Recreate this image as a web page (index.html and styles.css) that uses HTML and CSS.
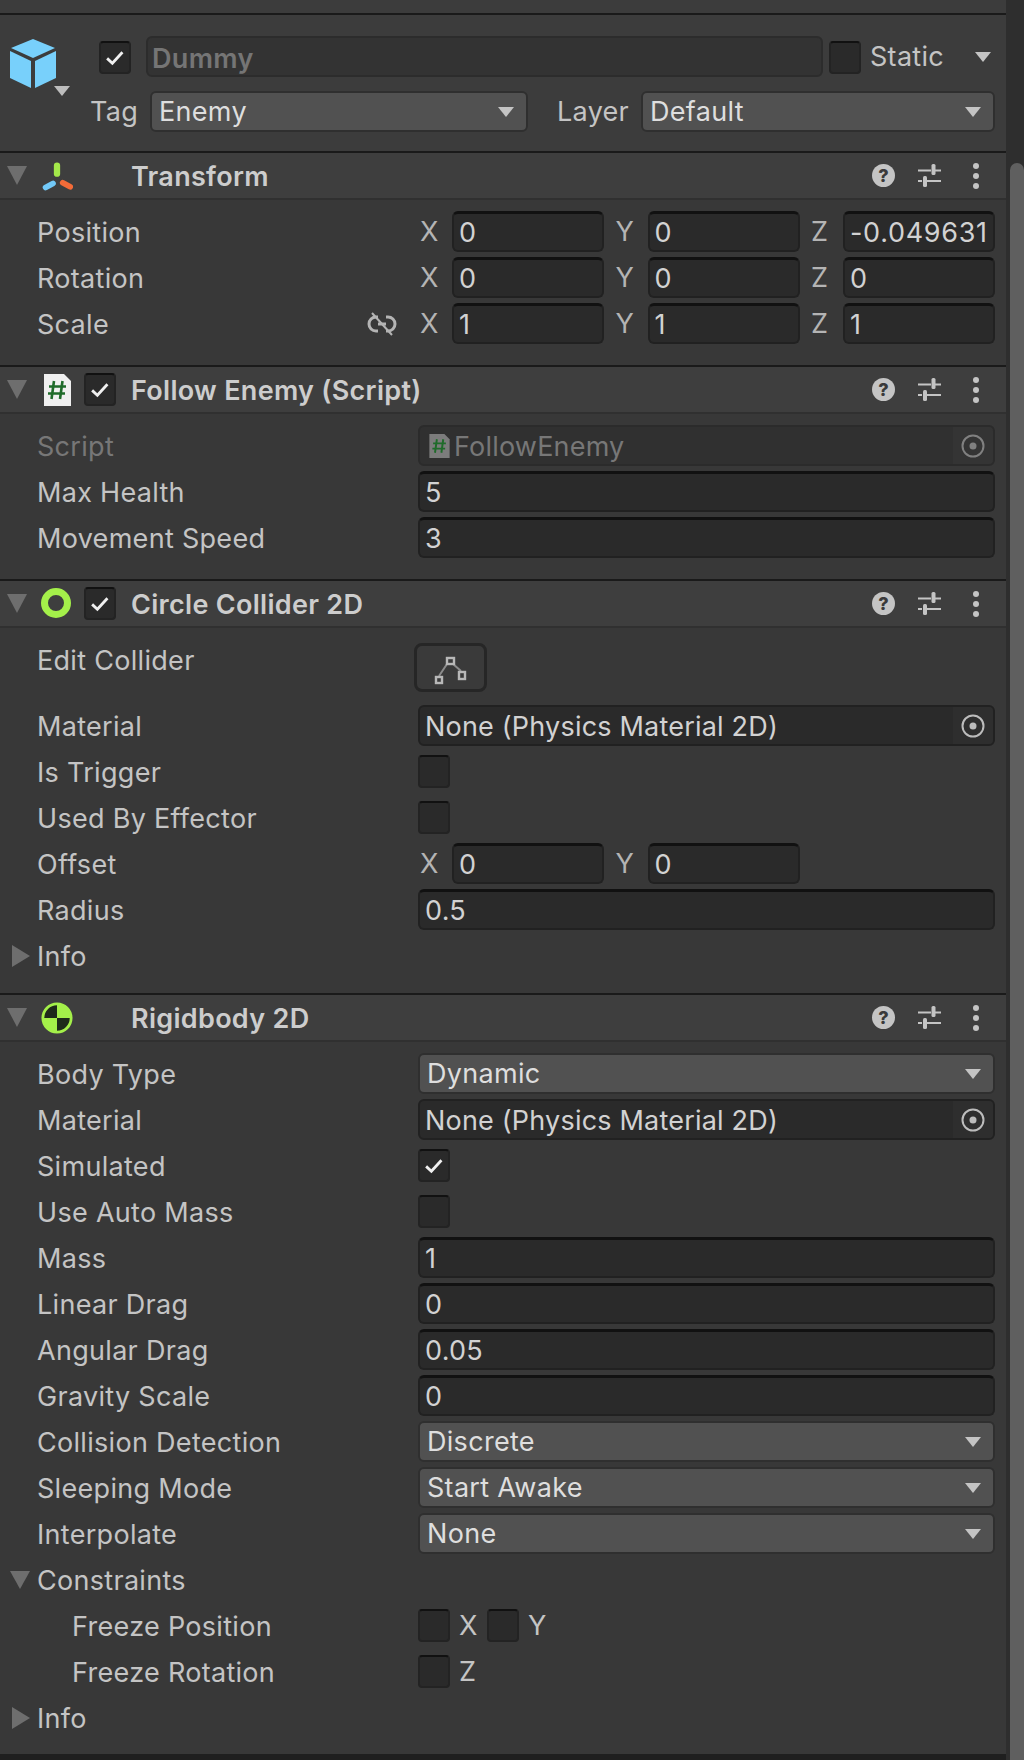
FILE: index.html
```html
<!DOCTYPE html>
<html lang="en">
  <head>
    <meta charset="UTF-8" />
    <title>Inspector</title>
    <link rel="stylesheet" href="styles.css">
  </head>
  <body>
    <svg class="defs" width="0" height="0">
      <symbol id="tick" viewBox="0 0 32 32">
        <path d="M7 17l6 5.500L24.500 10" fill="none" stroke="#f0f0f0" stroke-width="3.200"/>
      </symbol>
      <symbol id="target" viewBox="0 0 24 24">
        <circle cx="12" cy="12" r="10.500" fill="none" stroke="currentColor" stroke-width="2"/>
        <circle cx="12" cy="12" r="3.500" fill="currentColor"/>
      </symbol>
      <symbol id="sliders" viewBox="0 0 23 23">
        <path d="M0 6.500h13M17 6.500h6M0 17h4M8 17h15" fill="none" stroke="#c4c4c4" stroke-width="2"/>
        <rect x="13.500" y="0" width="4" height="11" rx="1.500" fill="#c4c4c4"/>
        <rect x="5" y="12" width="4" height="11" rx="1.500" fill="#c4c4c4"/>
      </symbol>
      <symbol id="script" viewBox="0 0 27 32">
        <path d="M0 0h20l7 7v25H0z" fill="currentColor"/>
        <path d="M10 7L7.500 25M18.500 7L16 25M5 12.500h17M4 19.500h17" fill="none" stroke="#1f6b2a" stroke-width="2.600"/>
      </symbol>
    </svg>

    <div class="inspector">
      <div class="topband"></div>

      <section class="go-header">
        <div class="go-first">
          <svg class="cube" viewBox="0 0 46 50">
            <path d="M23 0L45 9 23 19 1 9z" fill="#78d0fb"/>
            <path d="M0 12l21 10v27L0 39z" fill="#78d0fb"/>
            <path d="M46 12L25 22v27l21-10z" fill="#78d0fb"/>
          </svg>
          <span class="cube-caret"></span>
          <span class="check go-check"><svg><use href="#tick"/></svg></span>
          <div class="name-field">Dummy</div>
          <span class="check static-check"></span>
          <span class="static-label">Static</span>
          <span class="caret static-caret"></span>
        </div>
        <div class="go-second">
          <span class="tag-label">Tag</span>
          <div class="dropdown tag-drop">Enemy<span class="caret"></span></div>
          <span class="layer-label">Layer</span>
          <div class="dropdown layer-drop">Default<span class="caret"></span></div>
        </div>
      </section>

      <section class="comp">
        <header class="comp-head">
          <span class="fold"></span>
          <svg class="comp-icon" viewBox="0 0 28 28">
            <path d="M14 5v7" stroke="#a4e84a" stroke-width="5.500" stroke-linecap="round"/>
            <path d="M4 24l6.500-3.500" stroke="#72c9f8" stroke-width="5" stroke-linecap="round"/>
            <path d="M19 20l6.500 3.500" stroke="#f36b38" stroke-width="5" stroke-linecap="round"/>
          </svg>
          <span class="no-check"></span>
          <h2>Transform</h2>
          <span class="head-tools"><span class="help">?</span><svg class="tool"><use href="#sliders"/></svg><span class="dots"><i></i><i></i><i></i></span></span>
        </header>
        <div class="comp-body">
          <div class="row">
            <label>Position</label>
            <div class="vec">
              <span class="axis">X</span><div class="field">0</div>
              <span class="axis">Y</span><div class="field">0</div>
              <span class="axis">Z</span><div class="field">-0.049631</div>
            </div>
          </div>
          <div class="row">
            <label>Rotation</label>
            <div class="vec">
              <span class="axis">X</span><div class="field">0</div>
              <span class="axis">Y</span><div class="field">0</div>
              <span class="axis">Z</span><div class="field">0</div>
            </div>
          </div>
          <div class="row">
            <label>Scale</label>
            <svg class="link" viewBox="0 0 30 24">
              <path d="M11 5H9a7 7 0 0 0 0 14h2M19 5h2a7 7 0 0 1 0 14h-2M11 12h8" fill="none" stroke="#b4b4b4" stroke-width="3"/>
              <path d="M5 1l20 22" fill="none" stroke="#b4b4b4" stroke-width="2"/>
            </svg>
            <div class="vec">
              <span class="axis">X</span><div class="field">1</div>
              <span class="axis">Y</span><div class="field">1</div>
              <span class="axis">Z</span><div class="field">1</div>
            </div>
          </div>
        </div>
      </section>

      <section class="comp">
        <header class="comp-head">
          <span class="fold"></span>
          <svg class="comp-icon script-icon"><use href="#script"/></svg>
          <span class="check"><svg><use href="#tick"/></svg></span>
          <h2>Follow Enemy (Script)</h2>
          <span class="head-tools"><span class="help">?</span><svg class="tool"><use href="#sliders"/></svg><span class="dots"><i></i><i></i><i></i></span></span>
        </header>
        <div class="comp-body">
          <div class="row">
            <label class="dim">Script</label>
            <div class="field object dim-field">
              <svg class="mini-script"><use href="#script"/></svg>
              <span class="object-name">FollowEnemy</span>
              <span class="picker"><svg><use href="#target"/></svg></span>
            </div>
          </div>
          <div class="row"><label>Max Health</label><div class="field">5</div></div>
          <div class="row"><label>Movement Speed</label><div class="field">3</div></div>
        </div>
      </section>

      <section class="comp">
        <header class="comp-head">
          <span class="fold"></span>
          <svg class="comp-icon" viewBox="0 0 32 32">
            <circle cx="15" cy="15" r="11.500" fill="none" stroke="#a4f04a" stroke-width="7"/>
          </svg>
          <span class="check"><svg><use href="#tick"/></svg></span>
          <h2>Circle Collider 2D</h2>
          <span class="head-tools"><span class="help">?</span><svg class="tool"><use href="#sliders"/></svg><span class="dots"><i></i><i></i><i></i></span></span>
        </header>
        <div class="comp-body edit-body">
          <div class="row edit-row">
            <label>Edit Collider</label>
            <button class="edit-btn">
              <svg viewBox="0 0 40 36">
                <path d="M8 24L16 12M22 12l8 7" fill="none" stroke="#8c8c8c" stroke-width="2"/>
                <rect x="16" y="6" width="7" height="6" fill="none" stroke="#b8b8b8" stroke-width="2.400"/>
                <rect x="5" y="25" width="6" height="6" fill="none" stroke="#b8b8b8" stroke-width="2.400"/>
                <rect x="28" y="20" width="6" height="7" fill="none" stroke="#b8b8b8" stroke-width="2.400"/>
              </svg>
            </button>
          </div>
          <div class="row">
            <label>Material</label>
            <div class="field object">
              <span class="object-name">None (Physics Material 2D)</span>
              <span class="picker"><svg><use href="#target"/></svg></span>
            </div>
          </div>
          <div class="row"><label>Is Trigger</label><span class="check"></span></div>
          <div class="row"><label>Used By Effector</label><span class="check"></span></div>
          <div class="row">
            <label>Offset</label>
            <div class="vec vec-two">
              <span class="axis">X</span><div class="field">0</div>
              <span class="axis">Y</span><div class="field">0</div>
            </div>
          </div>
          <div class="row"><label>Radius</label><div class="field">0.5</div></div>
          <div class="row"><span class="fold-small closed"></span><label class="fold-label">Info</label></div>
        </div>
      </section>

      <section class="comp">
        <header class="comp-head">
          <span class="fold"></span>
          <svg class="comp-icon" viewBox="0 0 34 34">
            <circle cx="17" cy="17" r="15.500" fill="#a4f04a" stroke="#a4f04a" stroke-width="2"/>
            <path d="M17 17V3.500A13.500 13.500 0 0 0 3.500 17zM17 17v13.500A13.500 13.500 0 0 0 30.500 17z" fill="#1e2a1a"/>
          </svg>
          <span class="no-check"></span>
          <h2>Rigidbody 2D</h2>
          <span class="head-tools"><span class="help">?</span><svg class="tool"><use href="#sliders"/></svg><span class="dots"><i></i><i></i><i></i></span></span>
        </header>
        <div class="comp-body last-body">
          <div class="row"><label>Body Type</label><div class="dropdown">Dynamic<span class="caret"></span></div></div>
          <div class="row">
            <label>Material</label>
            <div class="field object">
              <span class="object-name">None (Physics Material 2D)</span>
              <span class="picker"><svg><use href="#target"/></svg></span>
            </div>
          </div>
          <div class="row"><label>Simulated</label><span class="check"><svg><use href="#tick"/></svg></span></div>
          <div class="row"><label>Use Auto Mass</label><span class="check"></span></div>
          <div class="row"><label>Mass</label><div class="field">1</div></div>
          <div class="row"><label>Linear Drag</label><div class="field">0</div></div>
          <div class="row"><label>Angular Drag</label><div class="field">0.05</div></div>
          <div class="row"><label>Gravity Scale</label><div class="field">0</div></div>
          <div class="row"><label>Collision Detection</label><div class="dropdown">Discrete<span class="caret"></span></div></div>
          <div class="row"><label>Sleeping Mode</label><div class="dropdown">Start Awake<span class="caret"></span></div></div>
          <div class="row"><label>Interpolate</label><div class="dropdown">None<span class="caret"></span></div></div>
          <div class="row"><span class="fold-small"></span><label class="fold-label">Constraints</label></div>
          <div class="row">
            <label class="sub">Freeze Position</label>
            <span class="check"></span><span class="flag">X</span>
            <span class="check"></span><span class="flag">Y</span>
          </div>
          <div class="row">
            <label class="sub">Freeze Rotation</label>
            <span class="check"></span><span class="flag">Z</span>
          </div>
          <div class="row"><span class="fold-small closed"></span><label class="fold-label">Info</label></div>
        </div>
      </section>
      <div class="end-line"></div>
    </div>

    <div class="scrollbar"><div class="thumb"></div></div>
  </body>
</html>
```

FILE: styles.css
```css
html {
  height: 100%;
}

body {
  margin: 0;
  height: 1760px;
  overflow: hidden;
  display: flex;
  background: #383838;
  color: #c4c4c4;
  font: 400 27px/43px "Inter", "Noto Sans", sans-serif;
  letter-spacing: 0.3px;
}

.defs {
  position: absolute;
}

.inspector {
  width: 1006px;
  flex: none;
}

.scrollbar {
  width: 18px;
  padding-left: 4px;
  box-sizing: border-box;
  background: #2e2e2e;
}

.thumb {
  margin-top: 163px;
  height: 1597px;
  background: #5f5f5f;
  border-radius: 7px 7px 0 0;
}

.topband {
  height: 13px;
  background: #3c3c3c;
}

/* game object header */
.go-header {
  height: 138px;
  box-sizing: border-box;
  border-top: 2px solid #1a1a1a;
  background: #3c3c3c;
  padding-top: 21px;
}

.go-first {
  display: flex;
  align-items: center;
  height: 41px;
}

.cube {
  width: 46px;
  height: 50px;
  margin: 3px 0 0 10px;
  align-self: flex-start;
  flex: none;
}

.cube-caret {
  width: 0;
  height: 0;
  margin: 50px 0 0 -2px;
  border: 8px solid transparent;
  border-top: 10px solid #bdbdbd;
  border-bottom: 0;
  align-self: flex-start;
  flex: none;
}

.go-check {
  margin: 2px 0 0 29px;
}

.name-field {
  width: 677px;
  height: 41px;
  margin-left: 15px;
  padding-left: 4px;
  box-sizing: border-box;
  border: 2px solid #2c2c2c;
  border-radius: 6px;
  background: #333;
  color: #757575;
  font-weight: 600;
  line-height: 41px;
  flex: none;
}

.static-check {
  margin: 2px 0 0 6px;
}

.static-label {
  margin-left: 9px;
  width: 105px;
  flex: none;
}

.go-second {
  display: flex;
  height: 41px;
  margin-top: 14px;
  align-items: center;
}

.tag-label {
  margin-left: 90px;
  width: 60px;
  flex: none;
}

.go-second .tag-drop {
  flex: none;
  width: 378px;
}

.layer-label {
  margin-left: 29px;
  width: 84px;
  flex: none;
}

.go-second .layer-drop {
  flex: none;
  width: 354px;
}

/* component */
.comp {
  border-top: 2px solid #1a1a1a;
}

.comp-head {
  height: 47px;
  box-sizing: border-box;
  display: flex;
  align-items: center;
  border-bottom: 2px solid #303030;
  background: #3e3e3e;
}

.comp-head h2 {
  margin: 0 0 0 15px;
  padding-top: 2px;
  flex: 1;
  font-size: 27px;
  font-weight: 600;
  color: #cdcdcd;
}

.fold {
  width: 0;
  height: 0;
  margin-left: 7px;
  border: 10px solid transparent;
  border-top: 19px solid #6e6e6e;
  border-bottom: 0;
  flex: none;
}

.comp-icon {
  width: 32px;
  height: 32px;
  margin-left: 14px;
  flex: none;
}

.script-icon {
  width: 27px;
  margin-left: 17px;
  color: #f0f0f0;
}

.comp-icon + .check {
  margin-left: 11px;
}

.script-icon + .check {
  margin-left: 13px;
}

.no-check {
  width: 32px;
  margin-left: 11px;
  flex: none;
}

.head-tools {
  display: flex;
  align-items: center;
  margin-right: 27px;
}

.help {
  width: 23px;
  height: 23px;
  border-radius: 50%;
  background: #c4c4c4;
  color: #3a3a3a;
  font-size: 18px;
  font-weight: 800;
  line-height: 23px;
  text-align: center;
  letter-spacing: 0;
}

.tool {
  width: 23px;
  height: 23px;
  margin-left: 23px;
}

.dots {
  display: flex;
  flex-direction: column;
  gap: 4px;
  margin-left: 32px;
}

.dots i {
  width: 6px;
  height: 6px;
  border-radius: 50%;
  background: #c4c4c4;
}

.comp-body {
  display: flex;
  flex-direction: column;
  gap: 5px;
  padding: 11px 11px 21px 37px;
}

.edit-body {
  padding-top: 15px;
  padding-bottom: 17px;
}

.last-body {
  padding-bottom: 16px;
}

.row {
  display: flex;
  align-items: center;
  height: 41px;
}

.row label {
  width: 381px;
  padding-top: 2px;
  flex: none;
}

.row label.dim {
  color: #777;
}

.row label.sub {
  padding-left: 35px;
  box-sizing: border-box;
}

.edit-row {
  height: 49px;
  align-items: flex-start;
  margin-bottom: 8px;
}

.edit-row label {
  padding-top: 0;
  line-height: 36px;
}

.edit-btn {
  width: 73px;
  height: 49px;
  margin-left: -4px;
  padding: 0;
  border: 3px solid #262626;
  border-radius: 8px;
  background: #3a3a3a;
}

.edit-btn svg {
  display: block;
  width: 40px;
  height: 36px;
  margin: 4px auto 0;
}

.field {
  flex: 1;
  height: 41px;
  box-sizing: border-box;
  padding-left: 5px;
  border: 2px solid #212121;
  border-top: 3px solid #111;
  border-radius: 6px;
  background: #2a2a2a;
  color: #d2d2d2;
  line-height: 37px;
  min-width: 0;
  white-space: nowrap;
  overflow: hidden;
}

.vec {
  flex: none;
  width: 577px;
  display: flex;
  align-items: center;
}

.vec .axis {
  width: 34px;
  padding-left: 2px;
  box-sizing: border-box;
  color: #b4b4b4;
  flex: none;
}

.vec .field {
  flex: none;
  width: 152px;
  margin-right: 9.500px;
}

.vec .field:last-child {
  margin-right: 0;
  letter-spacing: 0.700px;
}

.row .link {
  width: 30px;
  height: 24px;
  margin-left: -51px;
  margin-right: 21px;
  flex: none;
}

.object {
  display: flex;
  align-items: center;
  padding-right: 0;
  border-top: 2px solid #212121;
}

.object-name {
  flex: 1;
  line-height: 40px;
  height: 37px;
  letter-spacing: 0.200px;
}

.picker {
  width: 40px;
  height: 100%;
  display: flex;
  align-items: center;
  justify-content: center;
  background: #2e2e2e;
  color: #bcbcbc;
  flex: none;
}

.picker svg {
  width: 24px;
  height: 24px;
}

.dim-field {
  padding-left: 9px;
  border-color: #2b2b2b;
  background: #303030;
  color: #777;
}

.dim-field .picker {
  background: #343434;
  color: #808080;
}

.mini-script {
  width: 21px;
  height: 24px;
  margin-right: 4px;
  color: #7c7c7c;
  flex: none;
}

.dropdown {
  flex: 1;
  height: 41px;
  box-sizing: border-box;
  display: flex;
  align-items: center;
  justify-content: space-between;
  padding: 0 12px 0 7px;
  border: 2px solid #2f2f2f;
  border-radius: 6px;
  background: #515151;
  color: #dedede;
}

.caret {
  width: 0;
  height: 0;
  border: 8px solid transparent;
  border-top: 10px solid #c4c4c4;
  border-bottom: 0;
  flex: none;
}

.check {
  display: block;
  width: 32px;
  height: 33px;
  box-sizing: border-box;
  border: 2px solid #232323;
  border-top-color: #111;
  border-radius: 4px;
  background: #2a2a2a;
  flex: none;
}

.check svg {
  display: block;
  width: 28px;
  height: 29px;
}

.flag {
  margin: 0 11px 0 9px;
  width: 17px;
  flex: none;
}

.fold-small {
  width: 0;
  height: 0;
  margin-left: -27px;
  border: 10px solid transparent;
  border-top: 18px solid #6e6e6e;
  border-bottom: 0;
  flex: none;
}

.fold-small.closed {
  margin-left: -25px;
  border: 11px solid transparent;
  border-left: 18px solid #6e6e6e;
  border-right: 0;
}

.row label.fold-label {
  margin-left: 7px;
}

.end-line {
  height: 6px;
  background: #1f1f1f;
}
```
